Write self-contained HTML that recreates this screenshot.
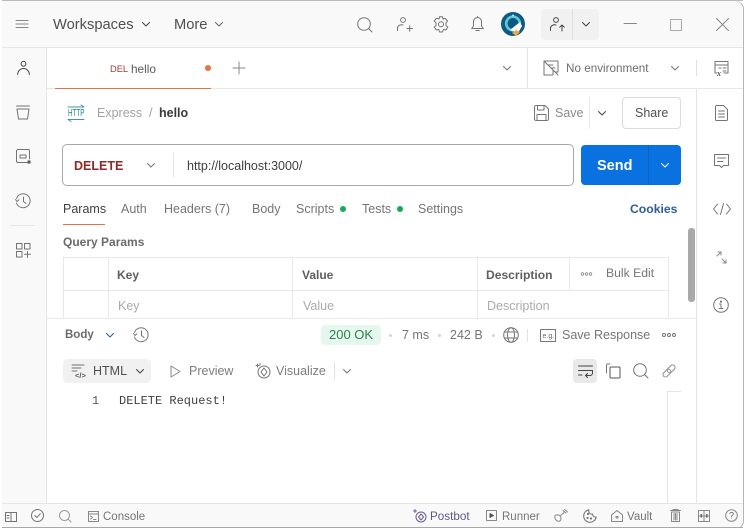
<!DOCTYPE html>
<html><head><meta charset="utf-8">
<style>
html,body{margin:0;padding:0;background:#fff}
#w{position:relative;width:750px;height:528px;overflow:hidden;background:#fff;font-family:"Liberation Sans",sans-serif;color:#6b6b6b;font-size:12.5px}
.t{position:absolute;white-space:nowrap;line-height:16px}
.b{position:absolute}
svg{position:absolute;overflow:visible;fill:none;stroke:#747474;stroke-width:1;stroke-linecap:round;stroke-linejoin:round}
svg text{stroke:none}
</style></head><body><div id="w">

<!-- window -->
<div class="b" style="left:2px;top:1px;width:741px;height:526px;border:1px solid #b5b5b5;border-left:none;border-radius:0 8px 8px 0;box-sizing:content-box"></div>
<div class="b" style="left:2px;top:0;width:741px;height:1px;background:#bdbdbd"></div>
<div class="b" style="left:2px;top:1px;width:740px;height:46px;background:#f9f9f9;border-radius:0 7px 0 0"></div>
<div class="b" style="left:2px;top:47px;width:741px;height:1px;background:#e6e6e6"></div>
<div class="b" style="left:2px;top:48px;width:44px;height:455px;background:#f9f9f9"></div>
<div class="b" style="left:46px;top:48px;width:1px;height:455px;background:#e6e6e6"></div>
<div class="b" style="left:696px;top:88px;width:1px;height:415px;background:#e6e6e6"></div>
<div class="b" style="left:47px;top:88px;width:696px;height:1px;background:#e9e9e9"></div>
<div class="b" style="left:2px;top:503px;width:741px;height:1px;background:#e6e6e6"></div>
<div class="b" style="left:2px;top:504px;width:741px;height:23px;background:#f9f9f9;border-radius:0 0 7px 0"></div>
<div class="b" style="left:2px;top:527px;width:741px;height:1px;background:#a8a8a8"></div>

<!-- header -->
<svg style="left:16px;top:20px" width="12" height="10"><path d="M0 .5H12M0 4H12M0 7.5H12" stroke="#888"/></svg>
<div class="t" style="left:53px;top:17px;font-size:14.7px;color:#505050">Workspaces</div>
<svg style="left:142px;top:22px" width="8" height="5"><path d="M.5 .5L4 4L7.5 .5" stroke="#444"/></svg>
<div class="t" style="left:174px;top:17px;font-size:14.7px;color:#505050">More</div>
<svg style="left:215px;top:22px" width="8" height="5"><path d="M.5 .5L4 4L7.5 .5" stroke="#666"/></svg>
<svg style="left:357px;top:17px" width="16" height="16"><circle cx="7" cy="7" r="6.3"/><path d="M11.5 11.5L15 15"/></svg>
<svg style="left:397px;top:17px" width="16" height="16"><circle cx="6" cy="3" r="2.4"/><path d="M.5 13.5V11A4 3.5 0 0 1 6 8M10 11.5H15.5M12.7 8.8V14.2"/></svg>
<svg style="left:433px;top:16px" width="16" height="17"><path d="M6.5 .8H9.5L10 3L12 2.2L14.5 5L13 6.8L13 9.5L14.8 11L13 14L10.5 13.5L9.5 16H6.5L5.8 13.5L3.3 14L1.2 11L3 9.5V6.8L1.2 5L3.5 2.2L6 3Z"/><circle cx="8" cy="8.3" r="2.5"/></svg>
<svg style="left:471px;top:16px" width="13" height="17"><path d="M6.5 1.5A4 4 0 0 0 2.5 5.5V10L.7 12.5H12.3L10.5 10V5.5A4 4 0 0 0 6.5 1.5ZM4.8 14.5H8.2"/><path d="M6.5 .5V1.5"/></svg>
<svg style="left:501px;top:12px;stroke:none" width="24" height="24"><circle cx="12" cy="12" r="12" fill="#0e5b82"/><circle cx="12" cy="11.5" r="6.8" fill="none" stroke="#62c6dc" stroke-width="2.6"/><path d="M9 18L19 10L21 14L17 21Z" fill="#fff"/><path d="M11 21L15 18L19 20L15 24Z" fill="#eda73d"/><circle cx="12" cy="3.5" r="1" fill="#bfe8f0"/></svg>
<div class="b" style="left:541px;top:9px;width:58px;height:31px;background:#f1f1f1;border-radius:4px"></div>
<div class="b" style="left:572px;top:9px;width:1px;height:31px;background:#dedede"></div>
<svg style="left:550px;top:17px" width="16" height="16"><circle cx="6" cy="3" r="2.4" stroke="#444"/><path d="M.5 13.5V11A4 3.5 0 0 1 6 8M12 14V8M9.7 10.2L12 8L14.3 10.2" stroke="#444"/></svg>
<svg style="left:582px;top:22px" width="8" height="5"><path d="M.5 .5L4 4L7.5 .5" stroke="#444"/></svg>
<svg style="left:624px;top:23px" width="13" height="2"><path d="M0 .5H12.5" stroke="#888"/></svg>
<svg style="left:670px;top:19px" width="12" height="12"><rect x=".5" y=".5" width="11" height="11" stroke="#aaa"/></svg>
<svg style="left:716px;top:18px" width="13" height="13"><path d="M.5 .5L12.5 12.5M12.5 .5L.5 12.5" stroke="#888"/></svg>

<!-- left sidebar -->
<svg style="left:17px;top:61px" width="13" height="14"><circle cx="6.5" cy="2.8" r="2.4" stroke="#444"/><path d="M.7 13.5A5.8 6 0 0 1 12.3 13.5" stroke="#444"/></svg>
<svg style="left:16px;top:105px" width="14" height="15"><path d="M.5 1H13.5M1 4H13L11.5 14H2.5Z"/></svg>
<svg style="left:16px;top:149px" width="15" height="15"><path d="M11 13.5H2A1.5 1.5 0 0 1 .5 12V2A1.5 1.5 0 0 1 2 .5H12A1.5 1.5 0 0 1 13.5 2V10"/><path d="M4 6H10V9H4Z"/><rect x="11.5" y="11.5" width="3" height="3" fill="#555" stroke="none"/></svg>
<svg style="left:15px;top:193px" width="16" height="16"><path d="M1.5 5.5A7 7 0 1 1 1.5 10M.5 6.5L2 8.5L4 6.8M8.5 4V8.5L11 10.5"/></svg>
<div class="b" style="left:10px;top:225px;width:25px;height:1px;background:#e6e6e6"></div>
<svg style="left:16px;top:243px" width="15" height="15"><rect x=".5" y=".5" width="5.5" height="5.5"/><rect x="8.5" y=".5" width="5.5" height="5.5"/><rect x=".5" y="8.5" width="5.5" height="5.5"/><path d="M8.5 11.3H14.5M11.5 8.5V14.5"/></svg>

<!-- tabs -->
<div class="t" style="left:110px;top:61px;font-size:9.3px;color:#9a3d3d">DEL</div>
<div class="t" style="left:131px;top:61px;font-size:11.8px;color:#5a5a5a">hello</div>
<div class="b" style="left:205px;top:65px;width:6px;height:6px;border-radius:50%;background:#e8743f"></div>
<svg style="left:233px;top:62px" width="12" height="12"><path d="M6 0V12M0 6H12" stroke="#8a8a8a"/></svg>
<div class="b" style="left:55px;top:88px;width:156px;height:1px;background:#d9744c"></div>
<svg style="left:503px;top:66px" width="8" height="5"><path d="M.5 .5L4 4L7.5 .5"/></svg>
<div class="b" style="left:527px;top:48px;width:1px;height:40px;background:#e6e6e6"></div>
<svg style="left:543px;top:60px" width="16" height="16"><path d="M1 1H15V12H12M1 1V15H10V11M1 1L15 15M5 5H10M8 8L12 8"/></svg>
<div class="t" style="left:566px;top:61px;font-size:11.7px;color:#6e6e6e">No environment</div>
<svg style="left:671px;top:66px" width="8" height="5"><path d="M.5 .5L4 4L7.5 .5"/></svg>
<div class="b" style="left:696px;top:60px;width:1px;height:16px;background:#e0e0e0"></div>
<svg style="left:714px;top:61px" width="15" height="15"><path d="M3 12H1V.5H14V12H10M1 4H14M5 7H7M9 7H12M9 10H12"/><text x="3" y="15" font-size="8" font-style="italic" font-weight="700" fill="#555" font-family="Liberation Serif">x</text></svg>

<!-- breadcrumb -->
<div class="t" style="left:68px;top:105px;font-size:10.5px;color:#1e7f8a;transform:scaleX(.6);transform-origin:left center">HTTP</div>
<svg style="left:67px;top:104px" width="18" height="20"><path d="M1 3H17M14 1L17 3M1 15.5H17M1 15.5L4 17.5" stroke="#3f97a3"/></svg>
<div class="t" style="left:97px;top:105px;font-size:12.5px;color:#a3a3a3">Express</div>
<div class="t" style="left:149px;top:105px;font-size:12.5px;color:#a3a3a3">/</div>
<div class="t" style="left:159px;top:105px;font-size:12.5px;font-weight:700;color:#3a3a3a">hello</div>
<svg style="left:534px;top:105px" width="15" height="16"><path d="M.5 2A1.5 1.5 0 0 1 2 .5H11L14.5 4V14A1.5 1.5 0 0 1 13 15.5H2A1.5 1.5 0 0 1 .5 14ZM3.5 .5V5H10V.5M3 15.5V9.5H12V15.5"/></svg>
<div class="t" style="left:555px;top:105px;font-size:12.5px;color:#8a8a8a">Save</div>
<div class="b" style="left:589px;top:97px;width:1px;height:32px;background:#e8e8e8"></div>
<svg style="left:598px;top:111px" width="8" height="5"><path d="M.5 .5L4 4L7.5 .5" stroke="#444"/></svg>
<div class="b" style="left:622px;top:97px;width:59px;height:32px;box-sizing:border-box;border:1px solid #dcdcdc;border-radius:4px"></div>
<div class="t" style="left:635px;top:105px;font-size:12.5px;color:#505050">Share</div>

<!-- url bar -->
<div class="b" style="left:62px;top:144px;width:512px;height:42px;box-sizing:border-box;border:1px solid #a8a8a8;border-radius:5px"></div>
<div class="t" style="left:74px;top:158px;font-size:12.5px;font-weight:700;color:#8e2a2a">DELETE</div>
<svg style="left:147px;top:163px" width="8" height="5"><path d="M.5 .5L4 4L7.5 .5"/></svg>
<div class="b" style="left:173px;top:153px;width:1px;height:24px;background:#e2e2e2"></div>
<div class="t" style="left:187px;top:158px;font-size:12.5px;color:#3f3f3f">http://localhost:3000/</div>
<div class="b" style="left:581px;top:145px;width:100px;height:40px;background:#0a72e0;border-radius:4px"></div>
<div class="b" style="left:648px;top:145px;width:1px;height:40px;background:#0a63c4"></div>
<div class="t" style="left:597px;top:158px;font-size:14.5px;font-weight:700;color:#fff">Send</div>
<svg style="left:661px;top:163px" width="8" height="5"><path d="M.5 .5L4 4L7.5 .5" stroke="#fff"/></svg>

<!-- request tabs -->
<div class="t" style="left:63px;top:201px;color:#3f3f3f">Params</div>
<div class="b" style="left:63px;top:224px;width:42px;height:1px;background:#d9744c"></div>
<div class="t" style="left:121px;top:201px;color:#757575">Auth</div>
<div class="t" style="left:164px;top:201px;color:#757575">Headers (7)</div>
<div class="t" style="left:252px;top:201px;color:#757575">Body</div>
<div class="t" style="left:296px;top:201px;color:#757575">Scripts</div>
<div class="b" style="left:340px;top:206px;width:6px;height:6px;border-radius:50%;background:#17a85a"></div>
<div class="t" style="left:362px;top:201px;color:#757575">Tests</div>
<div class="b" style="left:397px;top:206px;width:6px;height:6px;border-radius:50%;background:#17a85a"></div>
<div class="t" style="left:418px;top:201px;color:#757575">Settings</div>
<div class="t" style="left:630px;top:201px;font-weight:700;font-size:12.2px;color:#2f5c9c">Cookies</div>
<div class="t" style="left:63px;top:234px;font-weight:700;font-size:12px;color:#6b6b6b">Query Params</div>

<!-- table -->
<div class="b" style="left:63px;top:257px;width:606px;height:1px;background:#e8e8e8"></div>
<div class="b" style="left:63px;top:290px;width:606px;height:1px;background:#e8e8e8"></div>
<div class="b" style="left:63px;top:257px;width:1px;height:61px;background:#e8e8e8"></div>
<div class="b" style="left:108px;top:257px;width:1px;height:61px;background:#e8e8e8"></div>
<div class="b" style="left:292px;top:257px;width:1px;height:61px;background:#e8e8e8"></div>
<div class="b" style="left:477px;top:257px;width:1px;height:61px;background:#e8e8e8"></div>
<div class="b" style="left:569px;top:257px;width:1px;height:33px;background:#e8e8e8"></div>
<div class="b" style="left:668px;top:257px;width:1px;height:61px;background:#e8e8e8"></div>
<div class="t" style="left:117px;top:267px;font-weight:700;font-size:12px;color:#5f5f5f">Key</div>
<div class="t" style="left:302px;top:267px;font-weight:700;font-size:12px;color:#5f5f5f">Value</div>
<div class="t" style="left:486px;top:267px;font-weight:700;font-size:12.1px;color:#5f5f5f">Description</div>
<svg style="left:581px;top:272px" width="11" height="4"><circle cx="1.5" cy="2" r="1.2" stroke="#999"/><circle cx="5.5" cy="2" r="1.2" stroke="#999"/><circle cx="9.5" cy="2" r="1.2" stroke="#999"/></svg>
<div class="t" style="left:606px;top:265px;font-size:12.2px;color:#757575">Bulk Edit</div>
<div class="t" style="left:118px;top:298px;font-size:12.5px;color:#ababab">Key</div>
<div class="t" style="left:303px;top:298px;font-size:12.5px;color:#ababab">Value</div>
<div class="t" style="left:487px;top:298px;font-size:12.5px;color:#ababab">Description</div>
<div class="b" style="left:688px;top:228px;width:7px;height:74px;background:#a9a9a9;border-radius:3px"></div>

<div class="b" style="left:47px;top:318px;width:649px;height:1px;background:#e9e9e9"></div>

<!-- response -->
<div class="t" style="left:65px;top:327px;font-size:11.5px;font-weight:700;color:#6b6b6b">Body</div>
<svg style="left:106px;top:333px" width="8" height="5"><path d="M.5 .5L4 4L7.5 .5" stroke="#2f5c9c"/></svg>
<svg style="left:133px;top:327px" width="16" height="16"><path d="M1.5 5.5A7 7 0 1 1 1.5 10M.5 6.5L2 8.5L4 6.8M8.5 4V8.5L11 10.5"/></svg>
<div class="b" style="left:321px;top:325px;width:60px;height:20px;background:#e6f8ee;border-radius:4px"></div>
<div class="t" style="left:329px;top:327px;font-size:13px;color:#2f7d55">200 OK</div>
<div class="b" style="left:389px;top:334px;width:3px;height:3px;border-radius:50%;background:#d5d5d5"></div>
<div class="t" style="left:402px;top:327px;color:#757575">7 ms</div>
<div class="b" style="left:438px;top:334px;width:3px;height:3px;border-radius:50%;background:#d5d5d5"></div>
<div class="t" style="left:450px;top:327px;color:#757575">242 B</div>
<div class="b" style="left:492px;top:334px;width:3px;height:3px;border-radius:50%;background:#d5d5d5"></div>
<svg style="left:503px;top:327px" width="16" height="16"><circle cx="8" cy="8" r="7.3"/><ellipse cx="8" cy="8" rx="3.5" ry="7.3"/><path d="M1.5 5H14.5M1.5 11H14.5"/></svg>
<div class="b" style="left:527px;top:329px;width:1px;height:13px;background:#e2e2e2"></div>
<svg style="left:540px;top:329px" width="16" height="13"><rect x=".5" y=".5" width="15" height="12" stroke="#777"/><text x="2.5" y="9" font-size="7" fill="#666" font-family="Liberation Sans">e.g.</text></svg>
<div class="t" style="left:562px;top:327px;color:#757575">Save Response</div>
<svg style="left:662px;top:333px" width="14" height="4"><circle cx="2" cy="2" r="1.5"/><circle cx="7" cy="2" r="1.5"/><circle cx="12" cy="2" r="1.5"/></svg>

<div class="b" style="left:63px;top:359px;width:88px;height:24px;background:#f1f1f1;border-radius:4px"></div>
<svg style="left:72px;top:364px" width="15" height="15"><path d="M0 1H12M0 4H9M0 7H5"/><text x="3" y="14" font-size="7.5" font-weight="700" fill="#555" font-family="Liberation Sans">&lt;/&gt;</text></svg>
<div class="t" style="left:93px;top:363px;font-size:12.5px;color:#505050">HTML</div>
<svg style="left:136px;top:369px" width="8" height="5"><path d="M.5 .5L4 4L7.5 .5" stroke="#444"/></svg>
<svg style="left:170px;top:365px" width="11" height="13"><path d="M1 1L10 6.5L1 12Z" stroke="#888"/></svg>
<div class="t" style="left:189px;top:363px;font-size:12.5px;color:#7d7d7d">Preview</div>
<svg style="left:255px;top:363px" width="16" height="16"><circle cx="9" cy="9" r="6"/><path d="M6 9L9 5L12 9L9 13ZM1 2.5H4M2.5 1V4M5 .5V2"/></svg>
<div class="t" style="left:276px;top:363px;font-size:12.5px;color:#7d7d7d">Visualize</div>
<div class="b" style="left:334px;top:362px;width:1px;height:18px;background:#e2e2e2"></div>
<svg style="left:343px;top:369px" width="8" height="5"><path d="M.5 .5L4 4L7.5 .5"/></svg>

<div class="b" style="left:573px;top:359px;width:24px;height:24px;background:#e9e9e9;border-radius:4px"></div>
<svg style="left:578px;top:365px" width="15" height="13"><path d="M.5 1H14.5M.5 5.5H14.5M.5 10H4M14.5 5.5V8A2.5 2.5 0 0 1 12 10.5H7.5M9.5 8.5L7.5 10.5L9.5 12.5" stroke="#444"/></svg>
<svg style="left:606px;top:363px" width="15" height="16"><path d="M4 1H1.5A1 1 0 0 0 .5 2V10"/><rect x="4" y="4" width="10" height="11" rx="1" stroke="#555"/></svg>
<svg style="left:633px;top:363px" width="16" height="16"><circle cx="7" cy="7" r="6.3"/><path d="M11.5 11.5L15 15"/></svg>
<svg style="left:661px;top:363px" width="16" height="16"><g transform="rotate(-45 8 8)" stroke="#888"><rect x=".5" y="5.5" width="9" height="5" rx="2.5"/><rect x="6.5" y="5.5" width="9" height="5" rx="2.5"/></g></svg>

<div class="t" style="left:92px;top:393px;font-family:'Liberation Mono',monospace;font-size:12px;color:#5a5a5a">1</div>
<div class="t" style="left:119px;top:393px;font-family:'Liberation Mono',monospace;font-size:12px;color:#3f3f3f">DELETE Request!</div>
<div class="b" style="left:667px;top:391px;width:1px;height:112px;background:#e4e4e4"></div>
<div class="b" style="left:667px;top:391px;width:14px;height:1px;background:#e4e4e4"></div>

<!-- right sidebar -->
<svg style="left:715px;top:105px" width="13" height="16"><path d="M.5 1.5A1 1 0 0 1 1.5 .5H8.5L12.5 4.5V14.5A1 1 0 0 1 11.5 15.5H1.5A1 1 0 0 1 .5 14.5ZM3.5 6H9.5M3.5 9H9.5M3.5 12H9.5"/></svg>
<svg style="left:714px;top:154px" width="15" height="15"><path d="M.5 .5H14.5V11.5H9.5L7.5 13.5L5.5 11.5H.5ZM3.5 4H11.5M3.5 7.5H9"/></svg>
<svg style="left:713px;top:203px" width="18" height="12"><path d="M4.5 1L.5 6L4.5 11M13.5 1L17.5 6L13.5 11M10.5 .5L7.5 11.5"/></svg>
<svg style="left:716px;top:251px" width="11" height="13"><path d="M1 5L5 1M2 1H5V4M6 8L10 12M10 9V12H7" stroke="#888"/></svg>
<svg style="left:713px;top:297px" width="16" height="16"><circle cx="8" cy="8" r="7.3"/><path d="M6.5 7H8V11.5M6.2 11.5H9.8"/><circle cx="8" cy="4.6" r=".6" fill="#555"/></svg>

<!-- footer -->
<svg style="left:5px;top:512px" width="12" height="10"><rect x=".5" y=".5" width="11" height="9"/><path d="M6 .5V9.5M2 3.5H4M2 6H4"/></svg>
<svg style="left:31px;top:509px" width="13" height="13"><circle cx="6.5" cy="6.5" r="6"/><path d="M3.8 6.5L5.8 8.5L9.3 4.8"/></svg>
<svg style="left:59px;top:510px" width="13" height="13"><circle cx="5.5" cy="5.5" r="5" stroke="#999"/><path d="M9 9L12 12" stroke="#999"/></svg>
<svg style="left:88px;top:511px" width="11" height="11"><rect x=".5" y=".5" width="10" height="10" stroke="#888"/><path d="M.5 3H10.5M2.5 5L4.5 6.5L2.5 8M5.5 8.5H8" stroke="#888"/></svg>
<div class="t" style="left:103px;top:509px;font-size:11.5px;color:#757575">Console</div>
<svg style="left:413px;top:509px" width="14" height="14"><circle cx="8" cy="8" r="5" stroke="#6d5a9c"/><path d="M5.5 8L8 5L10.5 8L8 11ZM.5 2H3.5M2 .5V3.5" stroke="#6d5a9c"/></svg>
<div class="t" style="left:430px;top:509px;font-size:11.7px;color:#5f5a85">Postbot</div>
<svg style="left:486px;top:510px" width="12" height="12"><rect x=".5" y=".5" width="10" height="10" stroke="#888"/><path d="M4 3.5L7.5 5.5L4 7.5Z" fill="#555" stroke="#555"/></svg>
<div class="t" style="left:502px;top:509px;font-size:11.5px;color:#757575">Runner</div>
<svg style="left:555px;top:509px" width="14" height="13"><path d="M.5 6H4A4 4 0 0 1 5 12A4 4 0 0 1 .5 6ZM5 7L9 3.5M8 1.5L11 4M9.5 .5L12.5 3" stroke="#888"/></svg>
<svg style="left:583px;top:509px" width="14" height="14"><path d="M6 .8A6.3 6.3 0 1 0 13.2 8A3 3 0 0 1 9.5 5A3 3 0 0 1 6 .8Z"/><circle cx="5" cy="5" r=".6" fill="#555"/><circle cx="8" cy="9.5" r=".6" fill="#555"/><circle cx="4.5" cy="9" r=".6" fill="#555"/></svg>
<svg style="left:611px;top:510px" width="12" height="12"><path d="M.5 5L6 .5L11.5 5V11.5H.5ZM5 6.5H7V8H5Z" stroke="#888"/></svg>
<div class="t" style="left:627px;top:509px;font-size:11.5px;color:#757575">Vault</div>
<svg style="left:670px;top:509px" width="11" height="13"><path d="M.5 1.5H10.5M3 1.5V.5H8V1.5M1.5 3H9.5V12.5H1.5ZM4 4.5V11M5.5 4.5V11M7 4.5V11" stroke="#888"/></svg>
<svg style="left:698px;top:510px" width="12" height="12"><rect x=".5" y=".5" width="11" height="11" stroke="#888"/><path d="M6 .5V11.5M.5 6H11.5" stroke="#888"/><rect x="2.5" y="4" width="1.6" height="3.5" fill="#666" stroke="none"/><rect x="8" y="4" width="1.6" height="3.5" fill="#666" stroke="none"/></svg>
<svg style="left:725px;top:509px" width="13" height="13"><circle cx="6.5" cy="6.5" r="5.8" stroke="#888"/><text x="4" y="9.7" font-size="9" fill="#666" font-family="Liberation Sans">?</text></svg>

</div></body></html>
